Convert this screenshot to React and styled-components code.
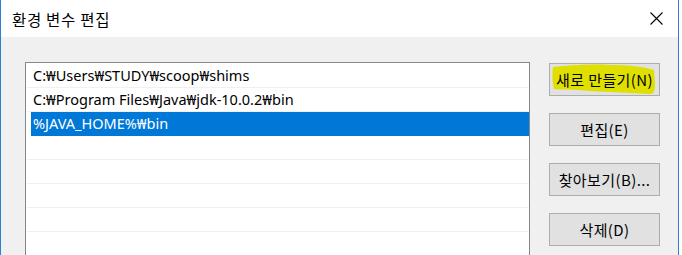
import React from "react";
import styled, { createGlobalStyle } from "styled-components";

const GlobalStyle = createGlobalStyle`
  html, body {
    margin: 0;
    padding: 0;
    background: #ffffff;
  }
  body {
    font-family: "Noto Sans CJK KR", "Noto Sans", sans-serif;
  }
`;

const Window = styled.div`
  width: 677px;
  height: 255px;
  overflow: hidden;
  border-left: 1px solid #2b7fd4;
  border-right: 1px solid #2b7fd4;
  background: #f0f0f0;
  display: flex;
  flex-direction: column;
`;

const TitleBar = styled.div`
  height: 37px;
  flex-shrink: 0;
  background: #ffffff;
  display: flex;
  align-items: center;
  justify-content: space-between;
  padding: 0 15px 0 11px;
`;

const Title = styled.span`
  font-size: 15.5px;
  color: #000;
  letter-spacing: 0.7px;
`;

const CloseButton = styled.div`
  width: 13px;
  height: 13px;
  display: flex;
`;

const Body = styled.div`
  flex: 1;
  display: flex;
  align-items: flex-start;
  gap: 19px;
  padding: 25px 0 0 24px;
`;

const ListBox = styled.div`
  width: 502px;
  height: 240px;
  flex-shrink: 0;
  background: #ffffff;
  border: 1px solid #828790;
  padding: 1px 0 0 1px;
  display: flex;
  flex-direction: column;
`;

const Row = styled.div`
  height: 24px;
  box-sizing: border-box;
  flex-shrink: 0;
  border-bottom: 1px solid ${(p) => (p.$selected ? "#0078d7" : "#f0f0f0")};
  margin-left: ${(p) => (p.$selected ? "4px" : "0")};
  padding-left: ${(p) => (p.$selected ? "2px" : "6px")};
  background: ${(p) => (p.$selected ? "#0078d7" : "transparent")};
  color: ${(p) => (p.$selected ? "#ffffff" : "#000000")};
  font-family: "Noto Sans", "Noto Sans CJK KR", sans-serif;
  font-size: 14.5px;
  line-height: 23px;
  white-space: nowrap;
`;

const ButtonColumn = styled.div`
  display: flex;
  flex-direction: column;
  gap: 17px;
  padding-top: 1px;
`;

const Button = styled.div`
  position: relative;
  width: 111px;
  height: 33px;
  box-sizing: border-box;
  background: #e1e1e1;
  border: 1px solid #adadad;
  display: flex;
  align-items: center;
  justify-content: center;
  font-size: 15px;
  letter-spacing: 0.4px;
  color: #000;
`;

const Highlight = styled.svg`
  position: absolute;
  left: 0;
  top: 0;
  width: 109px;
  height: 31px;
`;

const ButtonLabel = styled.span`
  position: relative;
`;

const rows = [
  "C:₩Users₩STUDY₩scoop₩shims",
  "C:₩Program Files₩Java₩jdk-10.0.2₩bin",
  "%JAVA_HOME%₩bin",
  "",
  "",
  "",
  "",
  "",
];

const App = () => {
  return (
    <>
      <GlobalStyle />
      <Window>
        <TitleBar>
          <Title>환경 변수 편집</Title>
          <CloseButton>
            <svg width="13" height="13" viewBox="0 0 13 13">
              <path d="M0.5 0.5 L12.5 12.5 M12.5 0.5 L0.5 12.5" stroke="#000" strokeWidth="1.1" fill="none" />
            </svg>
          </CloseButton>
        </TitleBar>
        <Body>
          <ListBox>
            {rows.map((r, i) => (
              <Row key={i} $selected={i === 2}>
                {r}
              </Row>
            ))}
          </ListBox>
          <ButtonColumn>
            <Button>
              <Highlight viewBox="0 0 109 31">
                <path
                  d="M3 3 C20 1 40 0 60 1 C80 1 95 3 104 6 L105 20 C105 26 104 30 100 30 C80 29 60 28 40 27 C25 25 10 26 4 25 C2 18 2 10 3 3 Z"
                  fill="#e0e000"
                />
              </Highlight>
              <ButtonLabel>새로 만들기(N)</ButtonLabel>
            </Button>
            <Button>
              <ButtonLabel>편집(E)</ButtonLabel>
            </Button>
            <Button>
              <ButtonLabel>찾아보기(B)...</ButtonLabel>
            </Button>
            <Button>
              <ButtonLabel>삭제(D)</ButtonLabel>
            </Button>
          </ButtonColumn>
        </Body>
      </Window>
    </>
  );
};

export default App;
